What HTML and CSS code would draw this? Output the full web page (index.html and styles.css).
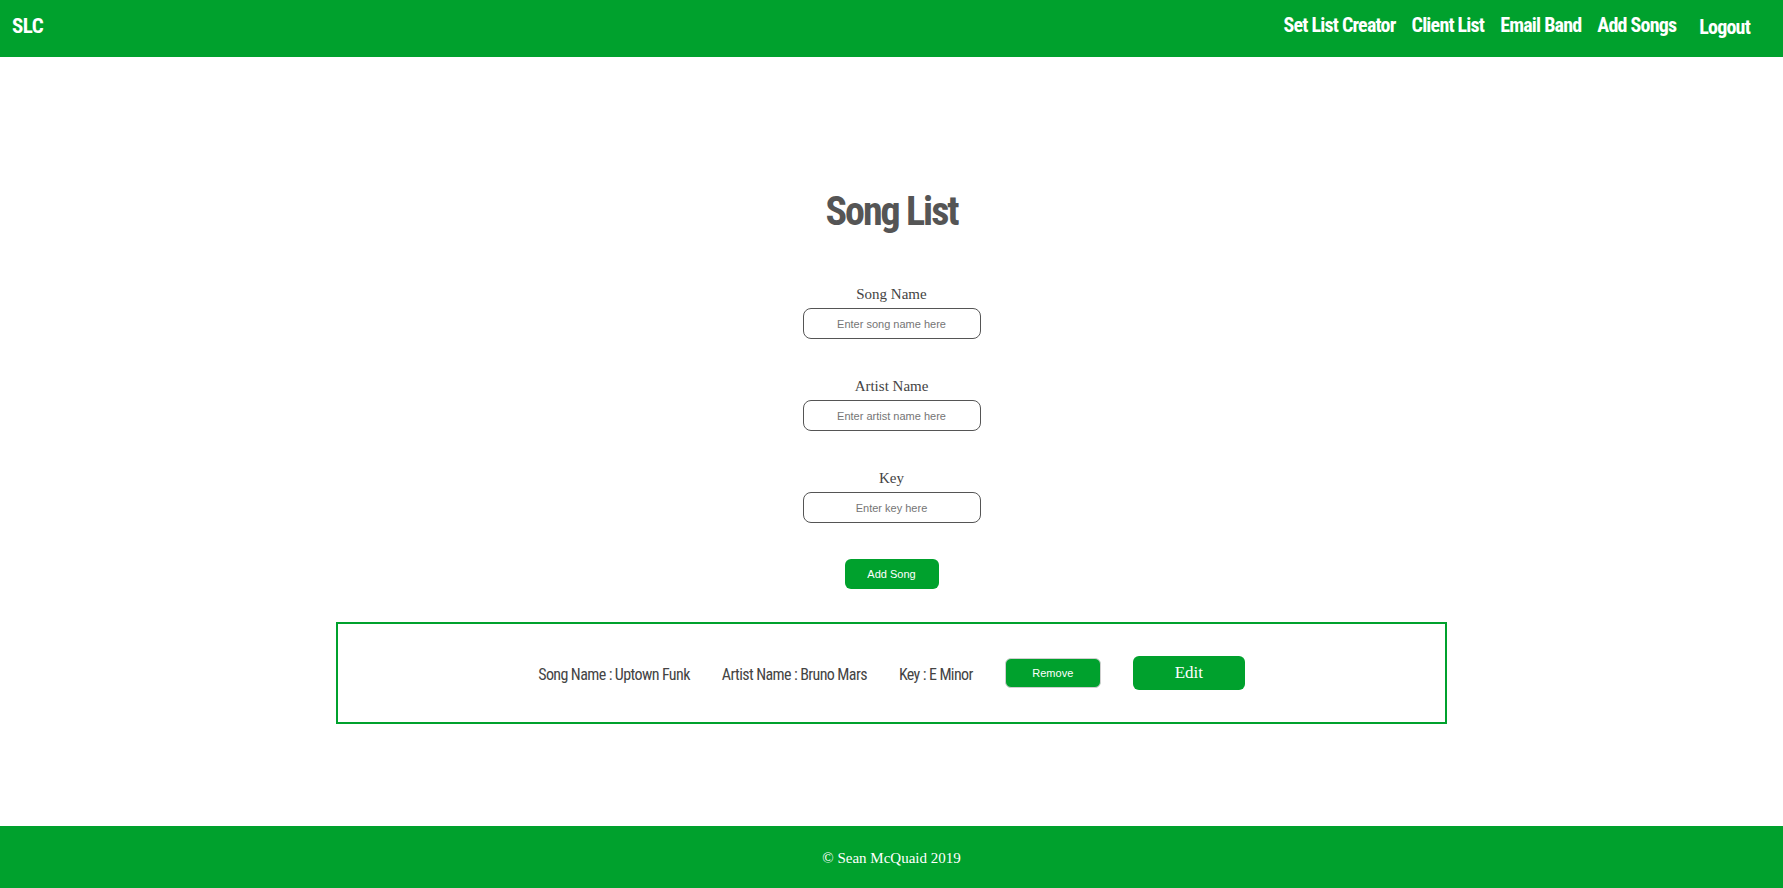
FILE: index.html
```html
<!DOCTYPE html>
<html lang="en">
<head>
<meta charset="utf-8">
<title>Song List</title>
<link rel="stylesheet" href="styles.css">
</head>
<body>
<div class="page">
  <header class="navbar">
    <a class="brand" href="#">SLC</a>
    <nav class="nav">
      <a href="#">Set List Creator</a>
      <a href="#">Client List</a>
      <a href="#">Email Band</a>
      <a href="#">Add Songs</a>
      <a href="#" class="logout">Logout</a>
    </nav>
  </header>
  <main class="main">
    <h1 class="title">Song List</h1>
    <form class="song-form">
      <div class="field">
        <label class="label">Song Name</label>
        <input class="input" type="text" placeholder="Enter song name here">
      </div>
      <div class="field">
        <label class="label">Artist Name</label>
        <input class="input" type="text" placeholder="Enter artist name here">
      </div>
      <div class="field">
        <label class="label">Key</label>
        <input class="input" type="text" placeholder="Enter key here">
      </div>
      <button class="add-btn" type="button">Add Song</button>
    </form>
    <section class="song-box">
      <div class="song-row">
        <span class="cell">Song Name : Uptown Funk</span>
        <span class="cell">Artist Name : Bruno Mars</span>
        <span class="cell">Key : E Minor</span>
        <button class="remove-btn" type="button">Remove</button>
        <button class="edit-btn" type="button">Edit</button>
      </div>
    </section>
  </main>
  <footer class="footer">© Sean McQuaid 2019</footer>
</div>
</body>
</html>
```
FILE: styles.css
```css
* { box-sizing: border-box; }
html, body { margin: 0; padding: 0; }
body {
  background: #fff;
  font-family: "Liberation Serif", serif;
  color: #444;
}
.page {
  min-height: 100vh;
  display: flex;
  flex-direction: column;
}
.navbar {
  height: 57px;
  background: #00a12d;
  display: flex;
  align-items: center;
  justify-content: space-between;
  padding: 0 33px 0 12px;
}
.brand, .nav a {
  font-family: "Roboto Condensed", "Liberation Sans Narrow", "DejaVu Sans Condensed", sans-serif;
  font-weight: bold;
  font-stretch: condensed;
  color: #fff;
  text-decoration: none;
  font-size: 20px;
  letter-spacing: -0.8px;
}
.brand { margin-top: -5px; font-size: 21px; letter-spacing: -0.5px; }
.nav {
  display: flex;
  align-items: center;
  gap: 16px;
  margin-top: -7px;
}
.nav .logout { margin-left: 7px; margin-top: 3px; }
.main {
  flex: 1;
  display: flex;
  flex-direction: column;
  align-items: center;
}
.title {
  margin: 131px 0 0;
  font-family: "Roboto Condensed", "Liberation Sans Narrow", "DejaVu Sans Condensed", sans-serif;
  font-weight: bold;
  font-stretch: condensed;
  font-size: 40px;
  line-height: 48px;
  letter-spacing: -2px;
  color: #555;
}
.song-form {
  margin-top: 49px;
  display: flex;
  flex-direction: column;
  align-items: center;
  gap: 38px;
}
.field {
  display: flex;
  flex-direction: column;
  align-items: center;
  gap: 5px;
}
.label {
  font-family: "Liberation Serif", serif;
  font-size: 15px;
  line-height: 18px;
  color: #444;
}
.input {
  width: 178px;
  height: 31px;
  border: 1px solid #555;
  border-radius: 8px;
  text-align: center;
  font-family: "Liberation Sans", Arial, sans-serif;
  font-size: 11px;
  color: #333;
  background: #fff;
}
.input::placeholder { color: #757575; }
.add-btn {
  margin-top: -2px;
  width: 94px;
  height: 30px;
  border: none;
  border-radius: 6px;
  background: #00a12d;
  color: #fff;
  font-family: "Liberation Sans", Arial, sans-serif;
  font-size: 11px;
}
.song-box {
  margin-top: 33px;
  width: 1111px;
  height: 102px;
  border: 2px solid #00a12d;
  display: flex;
  align-items: center;
  justify-content: center;
}
.song-row {
  display: flex;
  align-items: center;
  gap: 32px;
}
.cell {
  font-family: "Roboto Condensed", "Liberation Sans Narrow", "DejaVu Sans Condensed", sans-serif;
  font-stretch: condensed;
  font-size: 16px;
  letter-spacing: -0.6px;
  color: #444;
  padding-top: 2px;
}
.remove-btn {
  width: 96px;
  height: 30px;
  border: 1px solid #cfcfcf;
  border-radius: 6px;
  background: #00a12d;
  color: #fff;
  font-family: "Liberation Sans", Arial, sans-serif;
  font-size: 11px;
}
.edit-btn {
  width: 112px;
  height: 34px;
  border: none;
  border-radius: 6px;
  background: #00a12d;
  color: #fff;
  font-family: "Liberation Serif", serif;
  font-size: 17px;
}
.footer {
  height: 62px;
  background: #00a12d;
  color: #fff;
  display: flex;
  align-items: center;
  justify-content: center;
  font-family: "Liberation Serif", serif;
  font-size: 15px;
  padding-top: 2px;
}
```
